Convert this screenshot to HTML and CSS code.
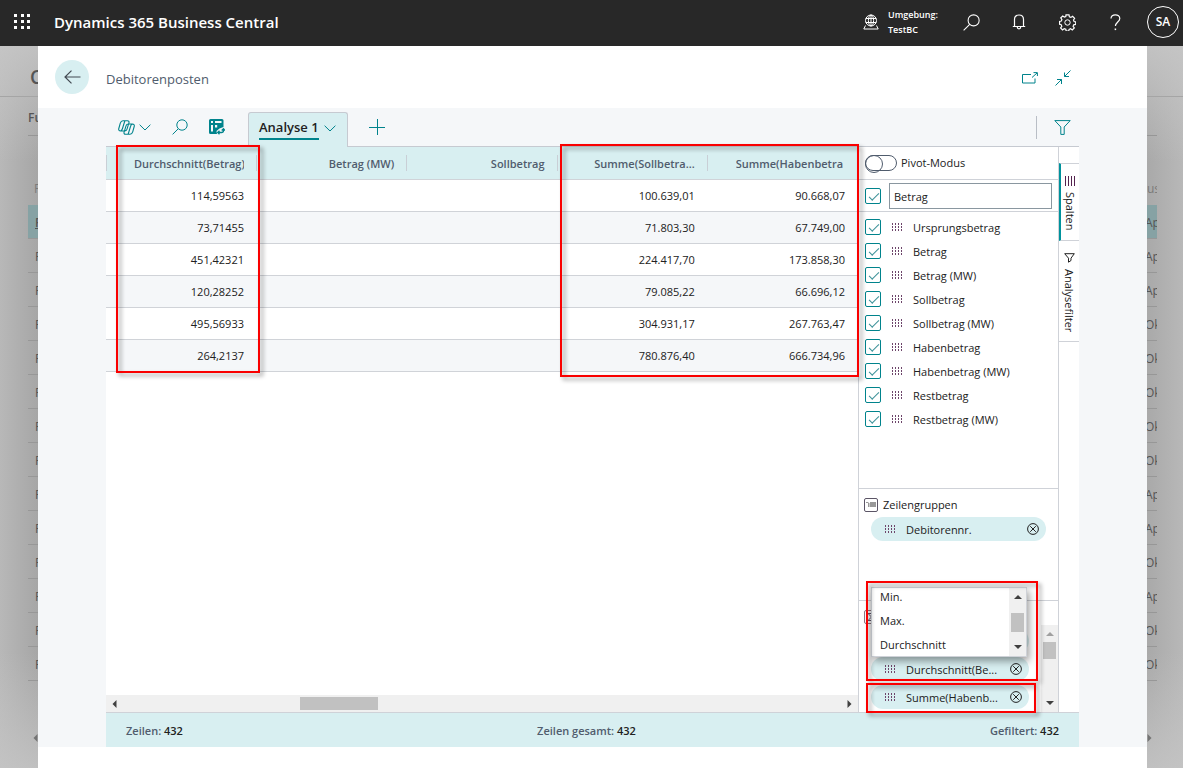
FILE: index.html
```html
<!DOCTYPE html>
<html lang="de">
<head>
<meta charset="utf-8">
<title>Debitorenposten - Dynamics 365 Business Central</title>
<link rel="stylesheet" href="styles.css">
</head>
<body>
<svg class="symbols" aria-hidden="true">
  <symbol id="i-grip" viewBox="0 0 11 9"><path d="M.5 0v9M3.500 0v9M6.500 0v9M9.500 0v9" fill="none" stroke="currentColor" stroke-dasharray="2 1"/></symbol>
  <symbol id="i-search" viewBox="0 0 16 16"><circle cx="10" cy="6" r="5.200"/><path d="M6.300 9.700.6 15.400"/></symbol>
  <symbol id="i-chev" viewBox="0 0 12 7"><path d="M.6.7 6 6 11.400.7"/></symbol>
  <symbol id="i-remove" viewBox="0 0 12 12"><circle cx="6" cy="6" r="5.400"/><path d="M3.200 3.200l5.600 5.600M8.800 3.200 3.200 8.800"/></symbol>
  <symbol id="i-up" viewBox="0 0 8 4"><path d="M0 4 4 0l4 4z" fill="currentColor" stroke="none"/></symbol>
  <symbol id="i-down" viewBox="0 0 8 4"><path d="M0 0 4 4l4-4z" fill="currentColor" stroke="none"/></symbol>
  <symbol id="i-left" viewBox="0 0 4 8"><path d="M4 0 0 4l4 4z" fill="currentColor" stroke="none"/></symbol>
  <symbol id="i-right" viewBox="0 0 4 8"><path d="M0 0l4 4-4 4z" fill="currentColor" stroke="none"/></symbol>
</svg>

<header class="topbar">
  <button class="waffle" aria-label="App-Startfeld"><svg width="17" height="17" viewBox="0 0 17 17"><path d="M0 0h3v3H0zM7 0h3v3H7zM13 0h3v3h-3zM0 6h3v3H0zM7 6h3v3H7zM13 6h3v3h-3zM0 12h3v3H0zM7 12h3v3H7zM13 12h3v3h-3z" fill="#fff" stroke="none"/></svg></button>
  <h1 class="product">Dynamics 365 Business Central</h1>
  <div class="environment">
    <svg width="16" height="16" viewBox="0 0 16 16"><circle cx="8" cy="6.500" r="5.500"/><ellipse cx="8" cy="6.500" rx="2.600" ry="5.500"/><path d="M8 1v11M2.800 4.500h10.400M2.800 8.500h10.400M2.500 11.500 .8 15h14.400l-1.700-3.500"/></svg>
    <div class="env-text">Umgebung:<br>TestBC</div>
  </div>
  <button class="top-action" aria-label="Suchen"><svg width="17" height="17"><use href="#i-search"/></svg></button>
  <button class="top-action" aria-label="Benachrichtigungen"><svg width="14" height="16" viewBox="0 0 14 16"><path d="M.8 12.500h12.400M2.500 12.500V5.500C2.500 2.800 4.400 1 7 1s4.500 1.800 4.500 4.500v7M5.300 13c0 2.400 3.400 2.400 3.400 0" stroke-width="1.200"/></svg></button>
  <button class="top-action" aria-label="Einstellungen"><svg width="17" height="17" viewBox="0 0 17 17"><circle cx="8.500" cy="8.500" r="2.700"/><path d="M7 .8h3l.4 2 1.500.6 1.700-1.100 2 2-1.100 1.700.6 1.500 1.600.4v2.500l-2 .4-.6 1.500 1.200 1.700-2 2-1.700-1.200-1.500.6-.4 1.800H7.200l-.4-1.900-1.600-.6-1.700 1.200-1.900-1.900 1.200-1.700-.6-1.600-1.600-.4V7.500l1.700-.4.600-1.500-1.100-1.700 1.900-1.900 1.700 1.100 1.400-.6z" stroke-width="1.200"/></svg></button>
  <button class="top-action" aria-label="Hilfe"><svg width="11" height="17" viewBox="0 0 11 17"><path d="M1 4.500C1 2.200 2.800.8 5.300.8S9.800 2.200 9.800 4.500c0 3.200-4.400 3.800-4.400 7.500" stroke-width="1.200"/><path d="M5.400 14.500v1.600" stroke-width="1.500"/></svg></button>
  <button class="avatar">SA</button>
</header>

<div class="stage">
  <div class="behind behind-left" aria-hidden="true">
    <div class="b-title">C</div>
    <div class="b-menu">Fu</div>
    <div class="b-head">F</div>
    <div class="b-rows">
      <div class="b-row b-selected">F</div><div class="b-row">F</div><div class="b-row">F</div><div class="b-row">F</div><div class="b-row">F</div><div class="b-row">F</div><div class="b-row">F</div><div class="b-row">F</div><div class="b-row">F</div><div class="b-row">F</div><div class="b-row">F</div><div class="b-row">F</div><div class="b-row">F</div><div class="b-row">F</div>
    </div>
    <div class="b-scroll"><svg width="5" height="8"><use href="#i-left"/></svg></div>
  </div>

  <main class="dialog">
    <div class="dialog-head">
      <button class="back" aria-label="Zurück"><svg width="17" height="14" viewBox="0 0 17 14"><path d="M7.500.6 1 7l6.500 6.400M1 7h15.500" stroke-width="1.200"/></svg></button>
      <h2 class="dialog-title">Debitorenposten</h2>
      <button class="icon-btn" aria-label="In neuem Fenster öffnen"><svg width="16" height="12" viewBox="0 0 16 12"><path d="M9 2.500H.5v8.500h12.500V6.500M10 5.500 15 1M11.500.6h3.900v3.400"/></svg></button>
      <button class="icon-btn" aria-label="Verkleinern"><svg width="16" height="16" viewBox="0 0 16 16"><path d="M15.500.5 9.500 6.500M9.500 2.500v4h4.500M.5 15.500l6-6M2 9.500h4.500V14"/></svg></button>
    </div>

    <div class="dialog-body">
      <div class="toolbar">
        <button class="icon-btn copilot" aria-label="Copilot"><svg width="17" height="15" viewBox="0 0 17 15"><path d="M5 .8h4.500c1.300 0 1.800.9 1.400 2.100L9 9.200c-.4 1.200-1.200 1.800-2.300 1.800H2.600C1 11 .4 9.900.8 8.500l1.500-5.300C2.800 1.600 3.600.8 5 .8zM12 14.200H7.500c-1.300 0-1.800-.9-1.400-2.100L8 5.800C8.400 4.600 9.200 4 10.300 4h4.100c1.600 0 2.200 1.100 1.800 2.500l-1.500 5.300c-.5 1.600-1.300 2.400-2.700 2.400zM6.800 1 4.500 8.500c-.3 1.200-.8 2-1.800 2.400M10.200 14l2.300-7.500c.3-1.200.8-2 1.800-2.400" stroke-width="1.100"/></svg><svg width="12" height="7"><use href="#i-chev"/></svg></button>
        <button class="icon-btn" aria-label="Suchen"><svg width="16" height="16"><use href="#i-search"/></svg></button>
        <button class="icon-btn" aria-label="Analysemodus"><svg width="16" height="16" viewBox="0 0 16 16"><path d="M1.500 0h11.500a1.500 1.500 0 0 1 1.500 1.500V8l-4 1.500L7.500 12l.5 3H1.500A1.500 1.500 0 0 1 0 13.500v-12A1.500 1.500 0 0 1 1.500 0z" fill="currentColor" stroke="none"/><path d="M2 2h2v2H2zM6 2h6.500v2H6zM2 6h2v6.500H2zM6 6h2.200v2.500H6z" fill="#f5f7f9" stroke="none"/><path d="M9 13.500h3.500c1.300 0 2-.7 2-2V10M12.700 11.500l1.800-1.800 1.500 1.800M10.500 11.800 8.700 13.500l1.800 1.800" stroke-width="1.300"/></svg></button>
        <button class="tab"><span class="tab-label">Analyse 1</span><svg width="12" height="7"><use href="#i-chev"/></svg></button>
        <button class="icon-btn add" aria-label="Neue Analyse"><svg width="16" height="16" viewBox="0 0 16 16"><path d="M8.500 0v16M0 8.500h16"/></svg></button>
        <div class="filter-wrap"><button class="icon-btn" aria-label="Filter"><svg width="17" height="15" viewBox="0 0 17 15"><path d="M.8.600h15.400L10.200 7v7.400H6.800V7z"/></svg></button></div>
      </div>

      <div class="workspace">
        <section class="grid">
          <table class="data">
            <thead><tr><th class="first"><span class="cut">Durchschnitt(Betrag)</span></th><th>Betrag (MW)</th><th>Sollbetrag</th><th>Summe(Sollbetra...</th><th><span class="cut">Summe(Habenbetra</span></th></tr></thead>
            <tbody>
              <tr><td>114,59563</td><td></td><td></td><td>100.639,01</td><td>90.668,07</td></tr>
              <tr><td>73,71455</td><td></td><td></td><td>71.803,30</td><td>67.749,00</td></tr>
              <tr><td>451,42321</td><td></td><td></td><td>224.417,70</td><td>173.858,30</td></tr>
              <tr><td>120,28252</td><td></td><td></td><td>79.085,22</td><td>66.696,12</td></tr>
              <tr><td>495,56933</td><td></td><td></td><td>304.931,17</td><td>267.763,47</td></tr>
              <tr><td>264,2137</td><td></td><td></td><td>780.876,40</td><td>666.734,96</td></tr>
            </tbody>
          </table>
          <div class="hscroll"><svg width="5" height="8"><use href="#i-left"/></svg><div class="htrack"><div class="hthumb"></div></div><svg width="5" height="8"><use href="#i-right"/></svg></div>
          <div class="mark mark-average"></div>
          <div class="mark mark-sums"></div>
        </section>

        <aside class="panel">
          <label class="pivot"><input type="checkbox" class="toggle">Pivot-Modus</label>
          <div class="find"><input type="checkbox" class="check" checked aria-label="Alle auswählen"><input type="text" class="find-box" value="Betrag" aria-label="Spalten suchen"></div>
          <div class="columns">
            <label class="column"><input type="checkbox" class="check" checked><svg class="grip"><use href="#i-grip"/></svg><span class="column-name">Ursprungsbetrag</span></label>
            <label class="column"><input type="checkbox" class="check" checked><svg class="grip"><use href="#i-grip"/></svg><span class="column-name">Betrag</span></label>
            <label class="column"><input type="checkbox" class="check" checked><svg class="grip"><use href="#i-grip"/></svg><span class="column-name">Betrag (MW)</span></label>
            <label class="column"><input type="checkbox" class="check" checked><svg class="grip"><use href="#i-grip"/></svg><span class="column-name">Sollbetrag</span></label>
            <label class="column"><input type="checkbox" class="check" checked><svg class="grip"><use href="#i-grip"/></svg><span class="column-name">Sollbetrag (MW)</span></label>
            <label class="column"><input type="checkbox" class="check" checked><svg class="grip"><use href="#i-grip"/></svg><span class="column-name">Habenbetrag</span></label>
            <label class="column"><input type="checkbox" class="check" checked><svg class="grip"><use href="#i-grip"/></svg><span class="column-name">Habenbetrag (MW)</span></label>
            <label class="column"><input type="checkbox" class="check" checked><svg class="grip"><use href="#i-grip"/></svg><span class="column-name">Restbetrag</span></label>
            <label class="column"><input type="checkbox" class="check" checked><svg class="grip"><use href="#i-grip"/></svg><span class="column-name">Restbetrag (MW)</span></label>
          </div>
          <section class="groups">
            <h3 class="group-title"><svg width="14" height="14" viewBox="0 0 14 14"><rect x=".5" y=".5" width="13" height="13" rx="1.500" stroke="#5b5566"/><path d="M2 4h2.500v1H2zM4 5h1.500v4H4zM6 4h6v5H6z" fill="#999" stroke="none"/></svg>Zeilengruppen</h3>
            <div class="pill"><svg class="grip"><use href="#i-grip"/></svg><span class="pill-text">Debitorennr.</span><button class="remove" aria-label="Entfernen"><svg width="12" height="12"><use href="#i-remove"/></svg></button></div>
          </section>
          <section class="values">
            <div class="value-title"><svg width="14" height="14" viewBox="0 0 14 14"><rect x=".5" y=".5" width="13" height="13" rx="1.500" stroke="#8d7883"/><path d="M4 3.500h6M4 3.500 7.500 7 4 10.500h6"/></svg></div>
            <div class="value-area">
              <div class="value-list">
                <div class="pill"></div>
                <div class="pill"><svg class="grip"><use href="#i-grip"/></svg><span class="pill-text">Durchschnitt(Be...</span><button class="remove" aria-label="Entfernen"><svg width="12" height="12"><use href="#i-remove"/></svg></button></div>
                <div class="pill"><svg class="grip"><use href="#i-grip"/></svg><span class="pill-text">Summe(Habenb...</span><button class="remove" aria-label="Entfernen"><svg width="12" height="12"><use href="#i-remove"/></svg></button></div>
              </div>
              <div class="vscroll"><svg class="dim" width="8" height="4"><use href="#i-up"/></svg><div class="vthumb"></div><svg class="vend" width="8" height="4"><use href="#i-down"/></svg></div>
            </div>
            <div class="popup">
              <div class="options"><button class="option">Min.</button><button class="option">Max.</button><button class="option">Durchschnitt</button></div>
              <div class="pscroll"><svg width="8" height="4"><use href="#i-up"/></svg><div class="pthumb"></div><svg width="8" height="4"><use href="#i-down"/></svg></div>
            </div>
            <div class="mark mark-popup"></div>
            <div class="mark mark-value"></div>
          </section>
        </aside>

        <nav class="side">
          <button class="side-tab side-active"><svg width="11" height="10" viewBox="0 0 11 10"><path d="M.5 0v10M3.500 0v10M6.500 0v10M9.500 0v10" stroke="#54224f"/></svg>Spalten</button>
          <button class="side-tab"><svg width="11" height="10" viewBox="0 0 11 10"><path d="M.7.700h9.600L7 5.200v2.300L4.500 9.200v-4z"/></svg>Analysefilter</button>
        </nav>
      </div>

      <footer class="status">
        <span>Zeilen: <b>432</b></span><span>Zeilen gesamt: <b>432</b></span><span>Gefiltert: <b>432</b></span>
      </footer>
    </div>
  </main>

  <div class="behind behind-right" aria-hidden="true">
    <div class="b-title"></div>
    <div class="b-menu"></div>
    <div class="b-head">us</div>
    <div class="b-rows">
      <div class="b-row b-selected">Ap</div><div class="b-row">Ap</div><div class="b-row">Ap</div><div class="b-row">Ok</div><div class="b-row">Ok</div><div class="b-row">Ok</div><div class="b-row">Ok</div><div class="b-row">Ok</div><div class="b-row">Ap</div><div class="b-row">Ap</div><div class="b-row">Ok</div><div class="b-row">Ap</div><div class="b-row">Ok</div><div class="b-row">Ok</div>
    </div>
    <div class="b-scroll"><svg width="5" height="8"><use href="#i-right"/></svg></div>
  </div>
</div>
</body>
</html>
```
FILE: styles.css
```css
* { box-sizing: border-box; }
body {
  margin: 0;
  height: 100vh;
  display: flex;
  flex-direction: column;
  font: 11px/16px "Open Sans", "Noto Sans", sans-serif;
  color: #212121;
  background: #fff;
  overflow: hidden;
}
h1, h2, h3 { margin: 0; font-weight: 400; }
button {
  border: 0;
  padding: 0;
  background: none;
  font: inherit;
  color: inherit;
}
svg { fill: none; stroke: currentColor; flex: none; display: block; }
.symbols { position: absolute; width: 0; height: 0; }

/* Top bar */
.topbar {
  height: 46px;
  flex: none;
  display: flex;
  align-items: center;
  padding: 0 4px 2px 14px;
  background: #282828;
  color: #fff;
}
.waffle { width: 40px; padding-top: 1px; }
.product { flex: 1; font-size: 15px; line-height: 20px; font-weight: 600; }
.environment { display: flex; align-items: center; gap: 9px; width: 84px; }
.env-text { font-size: 9px; line-height: 15px; font-weight: 600; }
.top-action { width: 48px; height: 44px; display: flex; align-items: center; justify-content: center; }
.avatar {
  width: 32px;
  height: 32px;
  margin-left: 8px;
  border: 1px solid #fff;
  border-radius: 50%;
  font-size: 12px;
  font-weight: 600;
}

/* Dimmed page on both sides of the dialog */
.stage { flex: 1; min-height: 0; display: grid; grid-template-columns: 38px 1fr 36px; }
.behind { display: flex; flex-direction: column; overflow: hidden; color: #555; font-size: 12px; }
.behind-left { background: linear-gradient(180deg, rgba(200,200,200,.8), transparent 16%, transparent 84%, rgba(198,198,198,.8)), linear-gradient(90deg, #b8b8b8, #a6a6a6); }
.behind-right { background: linear-gradient(180deg, rgba(200,200,200,.8), transparent 16%, transparent 84%, rgba(198,198,198,.8)), linear-gradient(270deg, #b8b8b8, #a9a9a9); }
.b-title {
  height: 51px;
  flex: none;
  border-bottom: 1px solid #a5a5a5;
  padding: 17px 0 0 30px;
  font-size: 19px;
  line-height: 28px;
  font-weight: 600;
}
.b-menu {
  height: 39px;
  flex: none;
  margin-left: 28px;
  padding-top: 13px;
  border-bottom: 1px solid #969696;
  font-weight: 600;
}
.b-head { height: 69px; flex: none; padding: 45px 0 0 34px; color: #7a7a7a; }
.b-rows { margin-left: 28px; flex: none; }
.b-row { height: 34px; padding: 9px 0 0 7px; border-bottom: 1px solid #979797; overflow: hidden; line-height: 18px; }
.b-selected { background: #86a2a4; text-decoration: underline; font-weight: 600; }
.b-scroll { height: 22px; margin: 45px 0 0 28px; padding: 8px 0 0 5px; color: #747474; }
.behind-right .b-title { padding: 0; }
.behind-right .b-menu, .behind-right .b-rows, .behind-right .b-head { margin: 0; width: 10px; }
.behind-right .b-head { padding-left: 0; overflow: hidden; }
.behind-right .b-row { padding-left: 0; text-indent: -2px; }
.behind-right .b-selected { text-decoration: none; font-weight: 400; }
.behind-right .b-scroll { margin-left: 0; padding-left: 0; }

/* Dialog */
.dialog { display: flex; flex-direction: column; min-width: 0; background: #fff; padding-bottom: 21px; }
.dialog-head {
  height: 62px;
  flex: none;
  display: flex;
  align-items: center;
  padding: 0 76px 0 17px;
  color: #505c6d;
}
.back {
  width: 34px;
  height: 34px;
  border-radius: 50%;
  background: #d8eff1;
  color: #424a52;
  display: flex;
  align-items: center;
  justify-content: center;
}
.dialog-title { flex: 1; margin-left: 17px; padding-top: 4px; font-size: 13px; line-height: 20px; }
.icon-btn { display: flex; align-items: center; gap: 4px; color: #00838c; }
.dialog-head .icon-btn { margin-left: 17px; padding-top: 2px; }
.dialog-body {
  flex: 1;
  min-height: 0;
  display: flex;
  flex-direction: column;
  padding: 0 68px;
  background: #f5f7f9;
}
.toolbar { height: 39px; flex: none; display: flex; align-items: center; padding: 0 8px 0 12px; border-bottom: 1px solid #c6cad1; gap: 21px; }
.tab {
  height: 35px;
  width: 100px;
  margin: 4px 0 -1px 2px;
  padding: 0 11px 3px 10px;
  display: flex;
  align-items: center;
  justify-content: space-between;
  border: 1px solid #c6cad1;
  border-bottom: 0;
  border-radius: 3px 3px 0 0;
  background: #d8eff1;
  color: #00838c;
  align-self: flex-start;
}
.tab-label { font-size: 13px; line-height: 20px; padding-bottom: 1px; font-weight: 600; color: #212121; border-bottom: 2px solid #00838c; }
.filter-wrap { margin-left: auto; height: 23px; padding-left: 17px; display: flex; border-left: 1px solid #b9bec6; }

.workspace { flex: 1; min-height: 0; display: flex; background: #fff; }
.grid { flex: 1; min-width: 0; position: relative; display: flex; flex-direction: column; }
.data { width: 100%; table-layout: fixed; border-collapse: separate; border-spacing: 0; }
.data th, .data td { padding: 0 13px 0 0; text-align: right; border-bottom: 1px solid #d0d3d8; }
.data th {
  height: 33px;
  padding-top: 1px;
  font-weight: 600;
  color: #505c6d;
  background: linear-gradient(#c9cfd6, #c9cfd6) right center / 1px 16px no-repeat, #d8eff1;
}
.data .first {
  width: 151px;
  background: linear-gradient(#c9cfd6, #c9cfd6) right center / 1px 16px no-repeat, linear-gradient(#c9cfd6, #c9cfd6) left center / 1px 16px no-repeat, #d8eff1;
}
.cut { display: block; margin-left: 28px; overflow: hidden; white-space: nowrap; text-align: left; }
.data td { height: 32px; padding-top: 1px; }
.data tbody tr:nth-child(even) { background: #f5f7f9; }
.hscroll { height: 17px; margin-top: auto; display: flex; align-items: center; justify-content: space-between; padding: 0 6px; background: #f0f0f0; color: #404040; }
.htrack { flex: 1; }
.hthumb { width: 78px; height: 13px; margin-left: 25%; background: #c1c1c1; }

.mark { position: absolute; border: 2px solid #fa0000; filter: drop-shadow(3px 3px 2px rgba(0, 0, 0, .4)); pointer-events: none; z-index: 2; }
.mark-average { left: 10px; top: -2px; width: 144px; height: 228px; }
.mark-sums { right: -1px; top: -3px; width: 299px; height: 233px; }

/* Column panel */
.panel { width: 201px; flex: none; display: flex; flex-direction: column; border: 1px solid #cfd2d8; border-width: 0 1px; }
.pivot { height: 33px; flex: none; display: flex; align-items: center; gap: 4px; padding-left: 6px; border-bottom: 1px solid #cfd2d8; }
.toggle {
  appearance: none;
  width: 32px;
  height: 16px;
  margin: 0;
  border: 1px solid #505c6d;
  border-radius: 8px;
}
.toggle::after { content: ""; display: block; width: 16px; height: 16px; margin: -1px; border: 1px solid #505c6d; border-radius: 50%; }
.find { height: 32px; flex: none; display: flex; align-items: center; gap: 8px; padding: 0 6px; border-bottom: 1px solid #cfd2d8; }
.find-box { flex: 1; min-width: 0; height: 26px; padding: 2px 4px 0; border: 1px solid #8a97a0; font: inherit; color: inherit; }
.check { appearance: none; width: 16px; height: 16px; margin: 0; border: 1px solid #00838c; border-radius: 2px; flex: none; }
.check::after { content: ""; display: block; width: 9px; height: 4px; margin: 4px 0 0 3px; border: 1px solid #3d9299; border-width: 0 0 1px 1px; transform: rotate(-45deg); }
.columns { flex: 1; padding: 3px 6px 0; }
.column { height: 24px; display: flex; align-items: center; }
.column-name { padding-top: 1px; }
.grip { width: 11px; height: 9px; color: #6d456a; }
.column .grip { margin: 0 10px 0 11px; }
.groups { height: 112px; flex: none; padding: 8px 12px 0 5px; border-top: 1px solid #cfd2d8; }
.group-title { display: flex; align-items: center; gap: 5px; font-size: 11px; line-height: 16px; margin-bottom: 4px; }
.pill { height: 24px; margin-left: 7px; padding: 0 7px 0 14px; display: flex; align-items: center; border-radius: 12px; background: #d8eff1; }
.pill-text { flex: 1; margin-left: 10px; padding-top: 1px; white-space: nowrap; }
.values { height: 112px; flex: none; position: relative; display: flex; flex-direction: column; border-top: 1px solid #cfd2d8; }
.value-title { height: 24px; flex: none; padding: 9px 0 0 5px; color: #60586c; }
.value-area { flex: 1; min-height: 0; display: flex; justify-content: space-between; }
.value-list { width: 170px; padding-top: 4px; display: grid; gap: 4px; align-content: start; }
.value-list .pill { margin-left: 12px; }
.vscroll { width: 17px; padding-top: 7px; display: flex; flex-direction: column; align-items: center; background: #f0f0f0; color: #404040; }
.vthumb { width: 13px; height: 17px; margin-top: 6px; background: #c1c1c1; }
.vend { margin: auto 0 7px; }
.dim { color: #a0a0a0; }
.popup {
  position: absolute;
  left: 12px;
  top: -14px;
  width: 156px;
  height: 70px;
  display: flex;
  border: 1px solid #cfd2d8;
  background: #fff;
  box-shadow: 2px 4px 8px rgba(0, 0, 0, .4);
  z-index: 1;
}
.options { flex: 1; overflow: hidden; margin-top: -3px; }
.option { display: block; height: 24px; width: 100%; padding-left: 8px; text-align: left; }
.pscroll { width: 17px; display: flex; flex-direction: column; align-items: center; justify-content: space-between; padding: 7px 0; background: #f0f0f0; color: #404040; }
.pthumb { width: 13px; height: 19px; background: #c1c1c1; }
.mark-popup { left: 7px; top: -20px; width: 172px; height: 100px; }
.mark-value { left: 7px; top: 82px; width: 170px; height: 30px; }

/* Vertical tabs */
.side { width: 20px; flex: none; padding-top: 16px; }
.side-tab {
  width: 20px;
  padding: 12px 0 9px;
  display: flex;
  align-items: center;
  gap: 6px;
  writing-mode: vertical-rl;
  border-bottom: 1px solid #cfd2d8;
}
.side-active { border-left: 2px solid #00929c; border-top: 1px solid #cfd2d8; }

.status {
  height: 35px;
  flex: none;
  display: flex;
  justify-content: space-between;
  align-items: center;
  padding: 1px 20px 0;
  border-top: 1px solid #cfd2d8;
  background: #d8eff1;
  font-weight: 600;
  color: #505c6d;
}
.status b { font-weight: 600; color: #212121; }
```
